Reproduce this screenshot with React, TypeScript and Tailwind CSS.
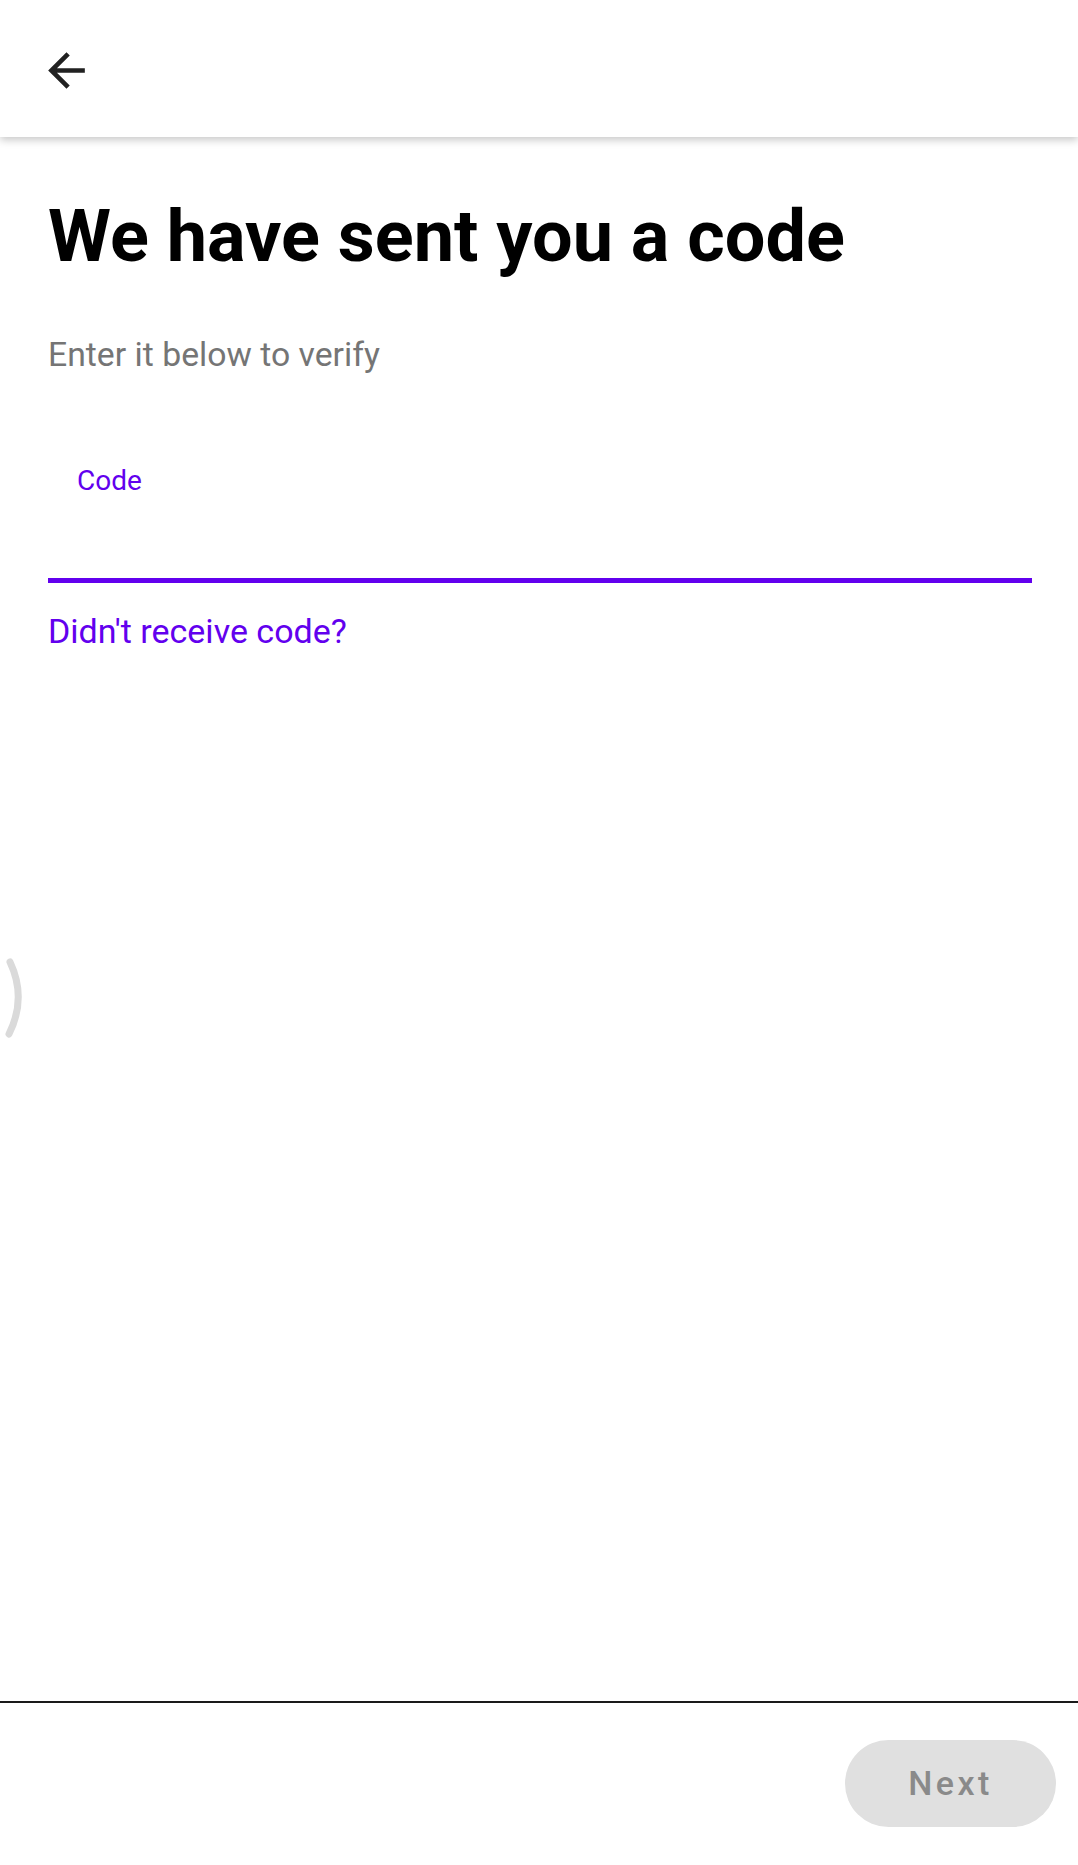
import React from 'react';

const BackArrow: React.FC = () => (
    <svg width="55" height="55" viewBox="0 0 24 24" className="text-[#212121]" fill="currentColor">
        <path d="M20 11H7.83l5.59-5.59L12 4l-8 8 8 8 1.41-1.41L7.83 13H20v-2z" />
    </svg>
);

const App: React.FC = () => {
    return (
        <div className="relative min-h-[1865px] flex flex-col bg-white" style={{ fontFamily: 'Roboto, "Noto Sans", sans-serif' }}>
            <header className="relative z-10 h-[137px] flex items-start bg-white shadow-[0_3px_8px_rgba(0,0,0,0.22)]">
                <button className="ml-[39px] mt-[43px] p-0">
                    <BackArrow />
                </button>
            </header>

            <main className="flex-1 pl-[48px] pr-[46px]">
                <h1 className="mt-[64px] text-[72px] leading-none font-bold text-black">
                    We have sent you a code
                </h1>
                <p className="mt-[65px] text-[33.75px] leading-none text-[#757575]">Enter it below to verify</p>

                <div className="mt-[95px]">
                    <label className="block pl-[29px] text-[28px] leading-none text-[#6200ee]">Code</label>
                    <div className="h-[88px] border-b-[5px] border-[#6200ee]" />
                </div>

                <button className="mt-[31px] text-[34px] leading-none text-[#6200ee]">Didn't receive code?</button>
            </main>

            <div className="absolute left-0 top-[952px] w-[30px] h-[92px]">
                <svg width="30" height="92" viewBox="0 0 30 92" fill="none">
                    <path d="M10 10 Q 27 46 9 82" stroke="#dadada" strokeWidth="7" strokeLinecap="round" />
                </svg>
            </div>

            <footer className="border-t-[2px] border-[#1a1a1a] flex justify-end pt-[37px] pb-[38px] pr-[22px]">
                <button className="w-[211px] h-[87px] rounded-full bg-[#e0e0e0] text-[34px] font-medium tracking-[0.1em] text-[#8a8a8a]">
                    Next
                </button>
            </footer>
        </div>
    );
};

export default App;
